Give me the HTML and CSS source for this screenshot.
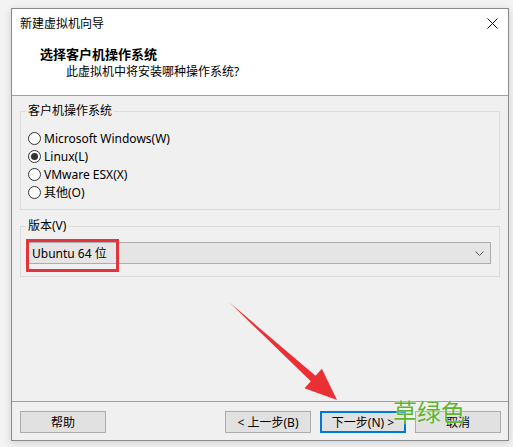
FILE: index.html
```html
<!DOCTYPE html>
<html lang="zh-CN">
<head>
    <meta charset="UTF-8" />
    <title>新建虚拟机向导</title>
    <link rel="stylesheet" href="styles.css">
</head>
<body>
    <div class="wizard">
        <div class="titlebar">
            <span class="titlebar-text">新建虚拟机向导</span>
            <svg class="close-btn" width="11" height="11" viewBox="0 0 11 11">
                <path d="M0.5 0.5 L10.5 10.5 M10.5 0.5 L0.5 10.5" stroke="#111" stroke-width="1" fill="none"/>
            </svg>
        </div>

        <div class="page-header">
            <h2 class="page-title">选择客户机操作系统</h2>
            <p class="page-subtitle">此虚拟机中将安装哪种操作系统?</p>
        </div>

        <div class="page-body">
            <fieldset class="group">
                <legend>客户机操作系统</legend>
                <div class="radio-list">
                    <label class="radio"><span class="radio-dot"></span>Microsoft Windows(W)</label>
                    <label class="radio checked"><span class="radio-dot"></span>Linux(L)</label>
                    <label class="radio"><span class="radio-dot"></span>VMware ESX(X)</label>
                    <label class="radio"><span class="radio-dot"></span>其他(O)</label>
                </div>
            </fieldset>

            <fieldset class="group version">
                <legend>版本(V)</legend>
                <div class="select">
                    <span>Ubuntu 64 位</span>
                    <svg class="select-arrow" width="9" height="5" viewBox="0 0 9 5">
                        <path d="M0.5 0.5 L4.5 4.5 L8.5 0.5" stroke="#555" stroke-width="1" fill="none"/>
                    </svg>
                    <div class="highlight-box"></div>
                </div>
            </fieldset>
        </div>

        <div class="page-footer">
            <button class="btn">帮助</button>
            <div class="footer-right">
                <button class="btn">&lt; 上一步(B)</button>
                <button class="btn btn-default">下一步(N) &gt;</button>
                <button class="btn">取消</button>
            </div>
        </div>

        <!-- annotation layer -->
        <svg class="pointer-arrow" width="513" height="447" viewBox="0 0 513 447">
            <path d="M229.5 302.5 L315.5 375.8 L321.9 368.8 L337 400 L304.5 388.2 L310.8 381.2 Z" fill="#ea3035"/>
        </svg>
        <span class="watermark">草绿色</span>
    </div>
</body>
</html>
```

FILE: styles.css
```css
* {
    margin: 0;
    padding: 0;
    box-sizing: border-box;
}

body {
    background-color: #f3f3f3;
    font-family: "Noto Sans", "Noto Sans CJK SC", sans-serif;
    font-size: 12px;
    color: #000;
    height: 447px;
    overflow: hidden;
}

.wizard {
    width: 498px;
    height: 433px;
    margin: 8px 0 0 11px;
    border: 1px solid #8a8a8a;
    background: #f0f0f0;
    box-shadow: 0 2px 8px rgba(0, 0, 0, 0.15);
    display: flex;
    flex-direction: column;
}

.titlebar {
    height: 29px;
    background: #fff;
    display: flex;
    align-items: center;
    justify-content: space-between;
    padding: 0 10px 0 8px;
    line-height: 16px;
}

.page-header {
    height: 58px;
    background: #fff;
    border-bottom: 1px solid #a0a0a0;
    padding: 7px 0 0 28px;
}

.page-title {
    font-size: 13px;
    font-weight: bold;
    line-height: 18px;
}

.page-subtitle {
    line-height: 18px;
    padding-left: 26px;
}

.page-body {
    flex: 1;
    padding: 7px 8px 0;
}

.group {
    border: 1px solid #dcdcdc;
    padding: 0 7px 8px;
}

.group legend {
    padding: 0 2px;
    margin-left: -2px;
    line-height: 16px;
}

.radio-list {
    padding-top: 10px;
    display: flex;
    flex-direction: column;
}

.radio {
    height: 18px;
    display: flex;
    align-items: center;
    gap: 3px;
}

.radio-dot {
    width: 13px;
    height: 13px;
    border: 1px solid #333;
    border-radius: 50%;
    background: #fff;
    display: flex;
    align-items: center;
    justify-content: center;
}

.radio.checked .radio-dot::after {
    content: "";
    width: 7px;
    height: 7px;
    border-radius: 50%;
    background: #333;
}

.version {
    margin-top: 8px;
    padding: 8px 8px 12px 7px;
}

.select {
    position: relative;
    height: 22px;
    margin-left: -1px;
    border: 1px solid #adadad;
    background: #e5e5e5;
    display: flex;
    align-items: center;
    justify-content: space-between;
    padding: 0 6px 0 4px;
}

/* red marker drawn round the chosen item */
.highlight-box {
    position: absolute;
    left: -2px;
    top: -4px;
    width: 93px;
    height: 33px;
    border: 3px solid #e0353c;
}

.page-footer {
    height: 39px;
    border-top: 1px solid #a0a0a0;
    display: flex;
    justify-content: space-between;
    padding: 9px 7px 0 8px;
}

.footer-right {
    display: flex;
    gap: 9px;
}

.btn {
    width: 86px;
    height: 22px;
    border: 1px solid #adadad;
    background: #e1e1e1;
    font-family: inherit;
    font-size: 12px;
    color: #000;
}

.btn-default {
    border: 2px solid #0078d7;
}

.pointer-arrow {
    position: absolute;
    left: 0;
    top: 0;
    pointer-events: none;
}

.watermark {
    position: absolute;
    left: 393px;
    top: 398px;
    font-family: "Noto Sans CJK SC", sans-serif;
    font-size: 24px;
    line-height: 26px;
    color: #5fb52f;
    text-shadow: 0 0 2px #fff;
}
```
